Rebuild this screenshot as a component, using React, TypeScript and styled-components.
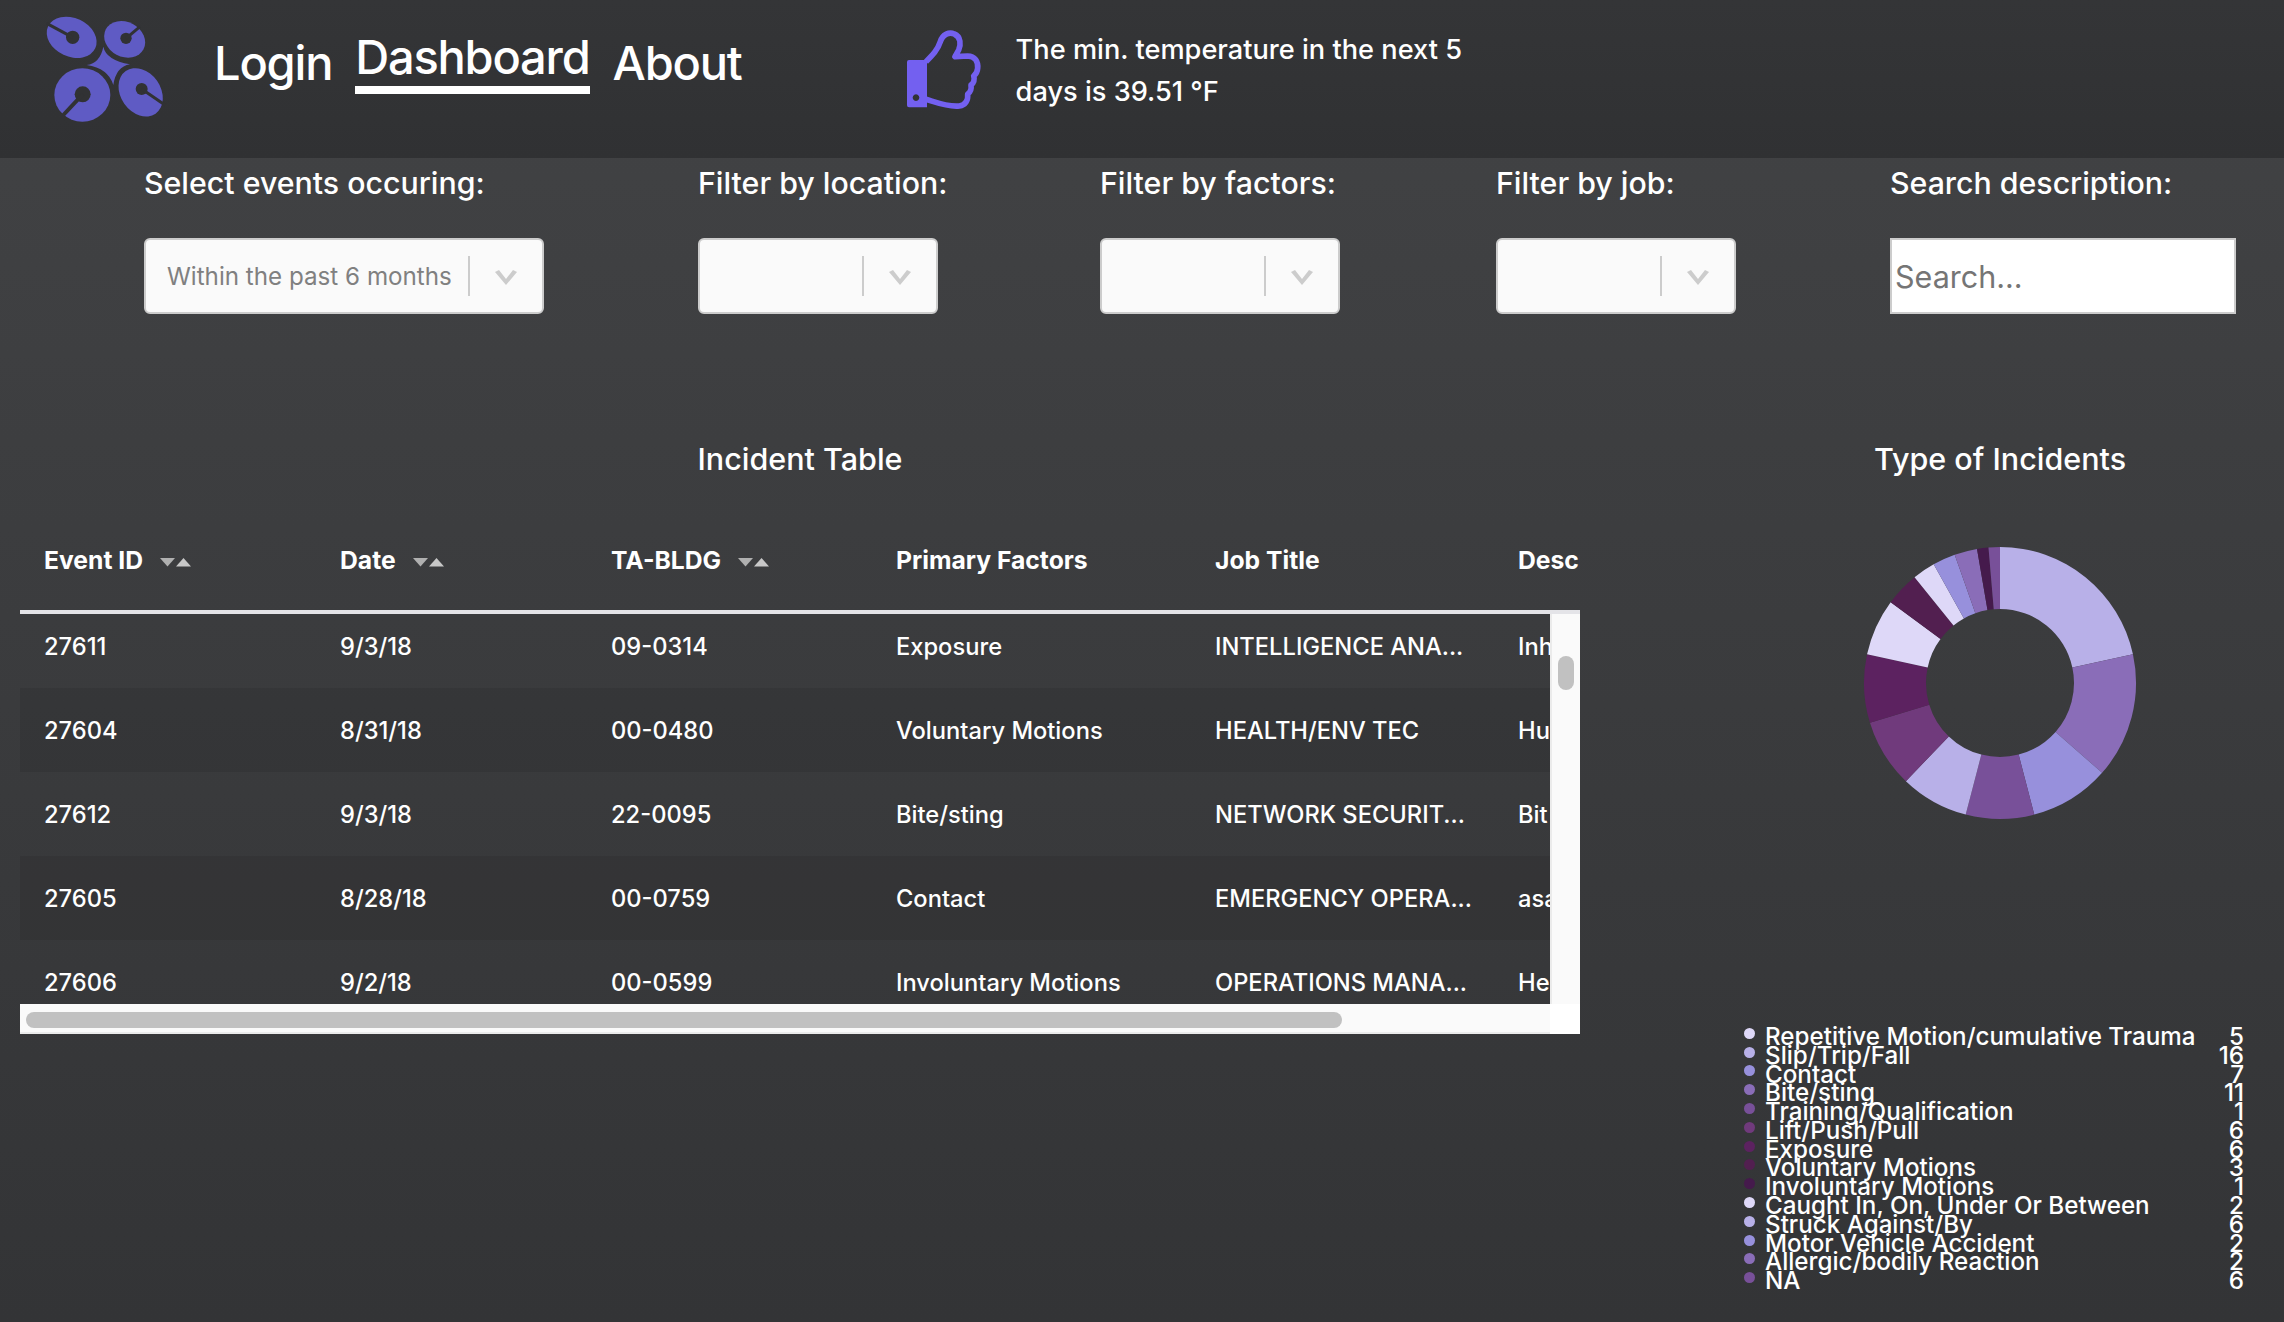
import React from 'react';
import styled, { createGlobalStyle } from 'styled-components';

const GlobalStyle = createGlobalStyle`
  html, body {
    margin: 0;
    padding: 0;
    background: #333436;
    overflow: hidden;
  }
  * {
    box-sizing: border-box;
  }
`;

const COLUMNS = [296, 271, 285, 319, 303, 300];

const ROWS = [
  ['27611', '9/3/18', '09-0314', 'Exposure', 'INTELLIGENCE ANA...', 'Inh'],
  ['27604', '8/31/18', '00-0480', 'Voluntary Motions', 'HEALTH/ENV TEC', 'Hu'],
  ['27612', '9/3/18', '22-0095', 'Bite/sting', 'NETWORK SECURIT...', 'Bit'],
  ['27605', '8/28/18', '00-0759', 'Contact', 'EMERGENCY OPERA...', 'asa'],
  ['27606', '9/2/18', '00-0599', 'Involuntary Motions', 'OPERATIONS MANA...', 'He'],
];

const LEGEND = [
  { label: 'Repetitive Motion/cumulative Trauma', value: 5, color: '#ded8f8' },
  { label: 'Slip/Trip/Fall', value: 16, color: '#b8b0e8' },
  { label: 'Contact', value: 7, color: '#9790dc' },
  { label: 'Bite/sting', value: 11, color: '#8a6db8' },
  { label: 'Training/Qualification', value: 1, color: '#785099' },
  { label: 'Lift/Push/Pull', value: 6, color: '#703a7c' },
  { label: 'Exposure', value: 6, color: '#5c2260' },
  { label: 'Voluntary Motions', value: 3, color: '#521f50' },
  { label: 'Involuntary Motions', value: 1, color: '#451a4c' },
  { label: 'Caught In, On, Under Or Between', value: 2, color: '#ded8f8' },
  { label: 'Struck Against/By', value: 6, color: '#b8b0e8' },
  { label: 'Motor Vehicle Accident', value: 2, color: '#9790dc' },
  { label: 'Allergic/bodily Reaction', value: 2, color: '#8a6db8' },
  { label: 'NA', value: 6, color: '#785099' },
];

// pie is drawn largest first, ties keep this order
const SLICES = [
  { value: 16, color: '#b8b0e8' },
  { value: 11, color: '#8a6db8' },
  { value: 7, color: '#9790dc' },
  { value: 6, color: '#785099' },
  { value: 6, color: '#b8b0e8' },
  { value: 6, color: '#703a7c' },
  { value: 6, color: '#5c2260' },
  { value: 5, color: '#ded8f8' },
  { value: 3, color: '#521f50' },
  { value: 2, color: '#ded8f8' },
  { value: 2, color: '#9790dc' },
  { value: 2, color: '#8a6db8' },
  { value: 1, color: '#451a4c' },
  { value: 1, color: '#785099' },
];

const arcPath = (start: number, end: number, outer: number, inner: number) => {
  const pt = (r: number, a: number) => `${(r * Math.sin(a)).toFixed(2)} ${(-r * Math.cos(a)).toFixed(2)}`;
  const large = end - start > Math.PI ? 1 : 0;
  return `M${pt(outer, start)} A${outer} ${outer} 0 ${large} 1 ${pt(outer, end)} L${pt(inner, end)} A${inner} ${inner} 0 ${large} 0 ${pt(inner, start)} Z`;
};

const Donut: React.FC = () => {
  const total = SLICES.reduce((sum, s) => sum + s.value, 0);
  let angle = 0;
  return (
    <svg width="280" height="280" viewBox="-140 -140 280 280">
      {SLICES.map((s, i) => {
        const start = angle;
        angle += (s.value / total) * Math.PI * 2;
        return <path key={i} d={arcPath(start, angle, 136, 74)} fill={s.color} />;
      })}
    </svg>
  );
};

const Logo: React.FC = () => (
  <svg width="150" height="125" viewBox="0 0 450 375">
    <path d="M220 125 Q228 165 300 178 Q258 185 250 240 Q235 190 170 180 Q210 175 220 125Z" fill="#5f5bc4" />
    <g fill="#5f5bc4">
      <ellipse cx="125" cy="97" rx="78" ry="58" transform="rotate(25 125 97)" />
      <ellipse cx="284" cy="103" rx="64" ry="52" transform="rotate(28 284 103)" />
      <ellipse cx="157" cy="270" rx="84" ry="80" />
      <ellipse cx="332" cy="262" rx="78" ry="60" transform="rotate(55 332 262)" />
    </g>
    <g fill="#313234" stroke="#313234">
      <circle cx="128" cy="97" r="20" stroke="none" />
      <circle cx="288" cy="100" r="17" stroke="none" />
      <circle cx="158" cy="268" r="24" stroke="none" />
      <circle cx="335" cy="252" r="18" stroke="none" />
      <path d="M128 97 L50 55" strokeWidth="9" />
      <path d="M288 100 L330 65" strokeWidth="9" />
      <path d="M158 268 L100 330" strokeWidth="12" />
      <path d="M335 252 L405 300" strokeWidth="9" />
    </g>
  </svg>
);

const ThumbIcon: React.FC = () => (
  <svg width="100" height="100" viewBox="0 0 300 300">
    <path
      d="M105 125 C125 105 140 90 148 65 C155 42 175 35 190 42 C210 50 210 75 203 90 L192 110 L230 108 C252 108 262 125 260 145 C259 158 252 165 248 168 C252 178 248 190 240 195 C242 208 236 218 230 222 C232 240 224 255 205 258 C170 262 130 245 105 238"
      fill="none"
      stroke="#7360f0"
      strokeWidth="17"
      strokeLinejoin="round"
    />
    <path
      fillRule="evenodd"
      d="M54 120 H108 V262 H54 Q48 262 48 256 V126 Q48 120 54 120Z M75 223 A10 10 0 1 0 75.01 223Z"
      fill="#7360f0"
    />
  </svg>
);

const Chevron: React.FC = () => (
  <ChevronSvg width="24" height="16" viewBox="0 0 24 16">
    <path d="M1 2 L5 0 L12 9 L19 0 L23 2 L12 15Z" fill="#cccccc" />
  </ChevronSvg>
);

const SortArrows: React.FC = () => (
  <SortSvg width="31" height="9" viewBox="0 0 31 9">
    <path d="M0 0 H15 L7.5 8.5Z" fill="#b0b0b0" />
    <path d="M16 8.5 H31 L23.5 0Z" fill="#c8c8c8" />
  </SortSvg>
);

const App: React.FC = () => (
  <Page>
    <GlobalStyle />
    <Header>
      <LogoWrap>
        <Logo />
      </LogoWrap>
      <NavLink>Login</NavLink>
      <NavLink $active>Dashboard</NavLink>
      <NavLink>About</NavLink>
      <Weather>
        <ThumbIcon />
        <WeatherText>
          The min. temperature in the next 5
          <br />
          days is 39.51 °F
        </WeatherText>
      </Weather>
    </Header>

    <Filters>
      <Filter>
        <FilterLabel>Select events occuring:</FilterLabel>
        <Select $width={400}>
          <SelectValue>Within the past 6 months</SelectValue>
          <SelectDivider />
          <Chevron />
        </Select>
      </Filter>
      <Filter>
        <FilterLabel>Filter by location:</FilterLabel>
        <Select $width={240}>
          <SelectValue />
          <SelectDivider />
          <Chevron />
        </Select>
      </Filter>
      <Filter>
        <FilterLabel>Filter by factors:</FilterLabel>
        <Select $width={240}>
          <SelectValue />
          <SelectDivider />
          <Chevron />
        </Select>
      </Filter>
      <Filter>
        <FilterLabel>Filter by job:</FilterLabel>
        <Select $width={240}>
          <SelectValue />
          <SelectDivider />
          <Chevron />
        </Select>
      </Filter>
      <Filter>
        <FilterLabel>Search description:</FilterLabel>
        <SearchInput placeholder="Search..." />
      </Filter>
    </Filters>

    <Content>
      <TableSection>
        <SectionTitle>Incident Table</SectionTitle>
        <TableHead>
          <HeadCell $width={COLUMNS[0]}>
            Event ID
            <SortArrows />
          </HeadCell>
          <HeadCell $width={COLUMNS[1]}>
            Date
            <SortArrows />
          </HeadCell>
          <HeadCell $width={COLUMNS[2]}>
            TA-BLDG
            <SortArrows />
          </HeadCell>
          <HeadCell $width={COLUMNS[3]}>Primary Factors</HeadCell>
          <HeadCell $width={COLUMNS[4]}>Job Title</HeadCell>
          <HeadCell $width={COLUMNS[5]}>Description</HeadCell>
        </TableHead>
        <TableBody>
          <RowsViewport>
            <RowsInner>
              {ROWS.map((row, i) => (
                <Row key={row[0]} $striped={i % 2 === 1}>
                  {row.map((cell, j) => (
                    <Cell key={j} $width={COLUMNS[j]}>
                      {cell}
                    </Cell>
                  ))}
                </Row>
              ))}
            </RowsInner>
          </RowsViewport>
          <VerticalTrack>
            <VerticalThumb />
          </VerticalTrack>
          <HorizontalTrack>
            <HorizontalThumb />
          </HorizontalTrack>
          <Corner />
        </TableBody>
      </TableSection>

      <ChartSection>
        <SectionTitle>Type of Incidents</SectionTitle>
        <DonutWrap>
          <Donut />
        </DonutWrap>
        <Legend>
          {LEGEND.map((item) => (
            <LegendRow key={item.label}>
              <LegendDot $color={item.color} />
              <LegendLabel>{item.label}</LegendLabel>
              <LegendValue>{item.value}</LegendValue>
            </LegendRow>
          ))}
        </Legend>
      </ChartSection>
    </Content>
  </Page>
);

export default App;

// Styled Components
const Page = styled.div`
  width: 2284px;
  height: 1322px;
  overflow: hidden;
  color: #fff;
  font-family: Inter, 'Liberation Sans', sans-serif;
  font-weight: 500;
  background: linear-gradient(180deg, #424345 0%, #333436 100%);
`;

const Header = styled.header`
  height: 158px;
  display: flex;
  align-items: flex-start;
  background: linear-gradient(180deg, #343537 0%, #303133 100%);
`;

const LogoWrap = styled.div`
  width: 214px;
  padding: 5px 0 0 30px;
  height: 137px;
`;

const NavLink = styled.a<{ $active?: boolean }>`
  margin-top: ${(p) => (p.$active ? '31px' : '37px')};
  margin-right: 23px;
  font-size: 47px;
  line-height: 52px;
  letter-spacing: -1.2px;
  padding-bottom: 3px;
  border-bottom: ${(p) => (p.$active ? '8px solid #fff' : 'none')};
`;

const ChevronSvg = styled.svg`
  margin-top: 4px;
`;

const SortSvg = styled.svg`
  margin-top: 4px;
`;

const Weather = styled.div`
  margin-left: 126px;
  padding-top: 20px;
  display: flex;
  align-items: flex-start;
`;

const WeatherText = styled.div`
  margin-left: 25px;
  padding-top: 9px;
  font-size: 27.2px;
  line-height: 42px;
`;

const Filters = styled.section`
  display: grid;
  grid-template-columns: 554px 402px 396px 394px 346px;
  padding: 3px 0 0 144px;
`;

const Filter = styled.div`
  display: flex;
  flex-direction: column;
`;

const FilterLabel = styled.label`
  font-size: 30.3px;
  line-height: 44px;
  margin-bottom: 33px;
  white-space: nowrap;
`;

const Select = styled.div<{ $width: number }>`
  width: ${(p) => p.$width}px;
  height: 76px;
  display: flex;
  align-items: center;
  padding-right: 24px;
  background: #fafafa;
  border: 2px solid #cccccc;
  border-radius: 6px;
`;

const SelectValue = styled.div`
  flex: 1;
  padding-left: 21px;
  font-size: 24.2px;
  font-weight: 400;
  color: #808080;
  white-space: nowrap;
`;

const SelectDivider = styled.div`
  width: 2px;
  height: 40px;
  margin-right: 24px;
  background: #cccccc;
`;

const SearchInput = styled.input`
  width: 346px;
  height: 76px;
  padding: 0 3px;
  border: 2px solid #cccccc;
  border-radius: 0;
  outline: none;
  background: #fff;
  font-family: inherit;
  font-size: 30.5px;

  &::placeholder {
    color: #757575;
    opacity: 1;
  }
`;

const Content = styled.section`
  display: flex;
  margin-top: 123px;
  padding-left: 20px;
`;

const TableSection = styled.div`
  width: 1560px;
`;

const SectionTitle = styled.h2`
  margin: 0;
  font-size: 30.5px;
  line-height: 44px;
  font-weight: 500;
  text-align: center;
`;

const TableHead = styled.div`
  margin-top: 27px;
  height: 106px;
  padding-top: 2px;
  display: flex;
  overflow: hidden;
  border-bottom: 4px solid #e4e4e8;
`;

const HeadCell = styled.div<{ $width: number }>`
  flex: 0 0 ${(p) => p.$width}px;
  display: flex;
  align-items: center;
  gap: 17px;
  padding-left: 24px;
  font-size: 24.7px;
  font-weight: 700;
  white-space: nowrap;
`;

const TableBody = styled.div`
  display: grid;
  grid-template-columns: 1530px 30px;
  grid-template-rows: 390px 30px;
`;

const RowsViewport = styled.div`
  overflow: hidden;
`;

const RowsInner = styled.div`
  margin-top: -10px;
`;

const Row = styled.div<{ $striped: boolean }>`
  height: 84px;
  display: flex;
  align-items: center;
  background: ${(p) => (p.$striped ? 'rgba(0, 0, 0, 0.07)' : 'transparent')};
`;

const Cell = styled.div<{ $width: number }>`
  flex: 0 0 ${(p) => p.$width}px;
  padding-left: 24px;
  font-size: 23.7px;
  white-space: nowrap;
`;

const VerticalTrack = styled.div`
  padding: 42px 6px 0 6px;
  background: #fafafa;
  border-left: 2px solid #ebebeb;
`;

const VerticalThumb = styled.div`
  width: 16px;
  height: 34px;
  border-radius: 8px;
  background: #c1c1c1;
`;

const HorizontalTrack = styled.div`
  padding: 8px 0 0 6px;
  background: #fafafa;
  border-bottom: 2px solid #ebebeb;
`;

const HorizontalThumb = styled.div`
  width: 1316px;
  height: 16px;
  border-radius: 8px;
  background: #c1c1c1;
`;

const Corner = styled.div`
  background: #fff;
`;

const ChartSection = styled.div`
  width: 568px;
  margin-left: 136px;
`;

const DonutWrap = styled.div`
  margin-top: 62px;
  height: 280px;
  display: flex;
  justify-content: center;
`;

const Legend = styled.div`
  margin-top: 204px;
  padding: 0 40px 0 28px;
`;

const LegendRow = styled.div`
  height: 18.8px;
  display: flex;
  align-items: center;
`;

const LegendDot = styled.span<{ $color: string }>`
  width: 11px;
  height: 11px;
  margin: -6px 10px 0 0;
  border-radius: 50%;
  background: ${(p) => p.$color};
`;

const LegendLabel = styled.span`
  flex: 1;
  font-size: 24.2px;
  white-space: nowrap;
`;

const LegendValue = styled.span`
  font-size: 24.2px;
`;
